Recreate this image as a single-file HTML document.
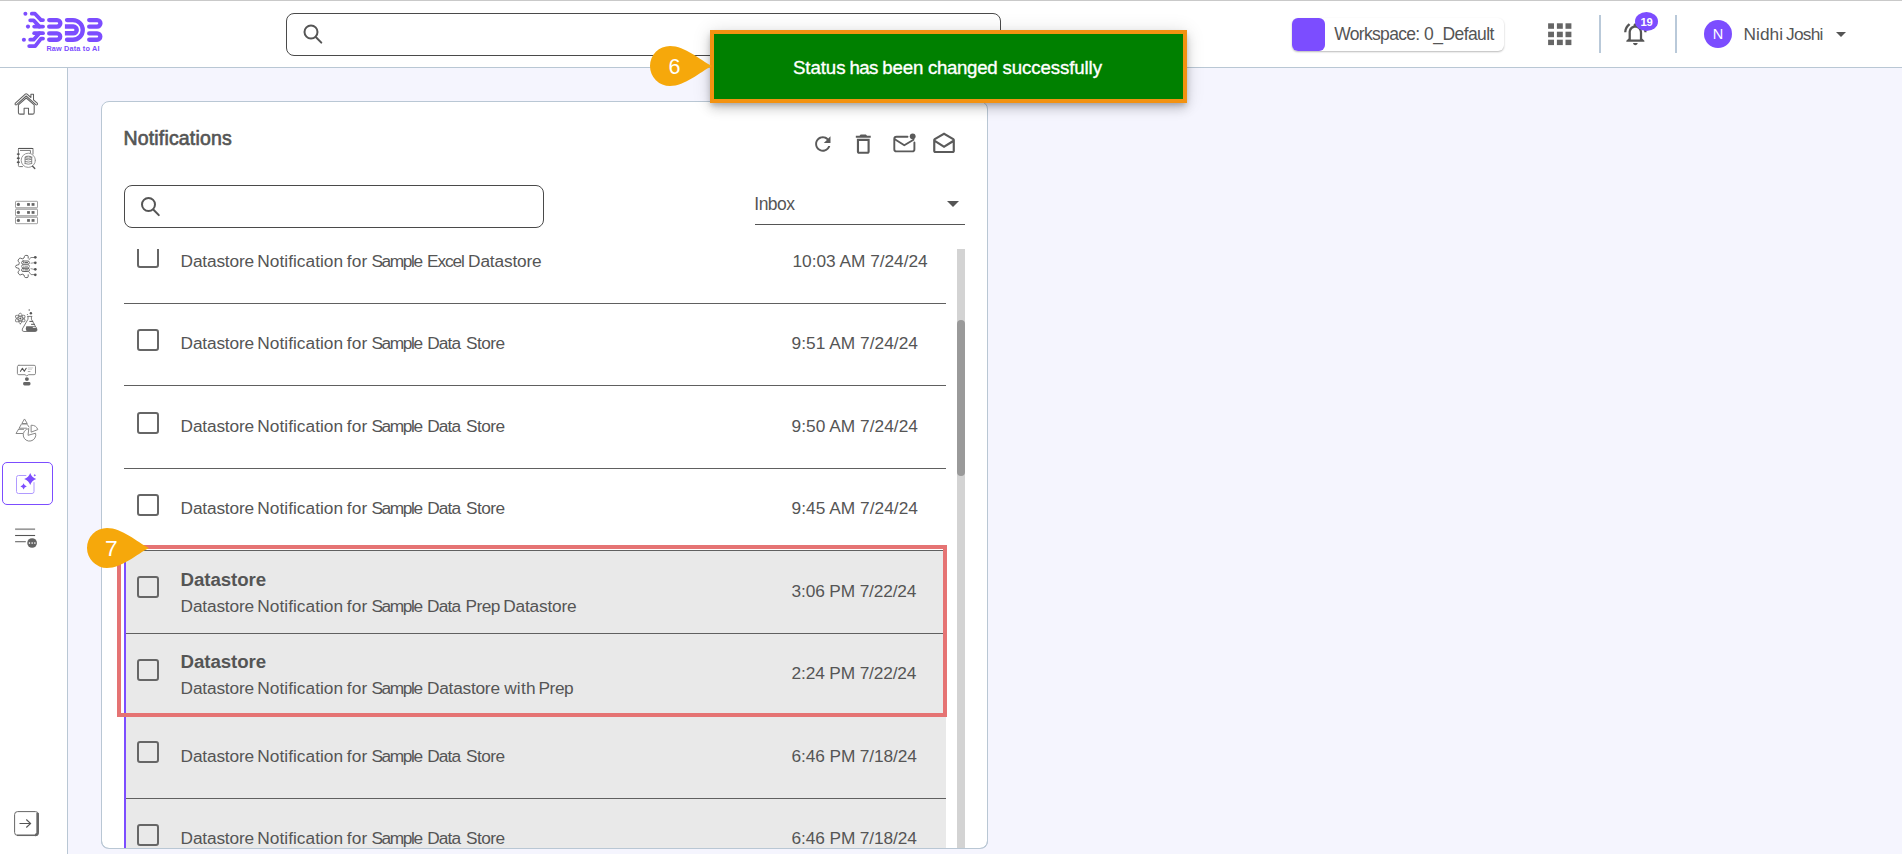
<!DOCTYPE html>
<html lang="en">
<head>
<meta charset="utf-8">
<title>Notifications</title>
<style>
*{box-sizing:border-box;margin:0;padding:0}
html,body{width:1902px;height:854px;overflow:hidden}
body{background:#f5f5fe;font-family:"Liberation Sans",sans-serif;color:#555;position:relative}
.abs{position:absolute}
#header{left:0;top:0;width:1902px;height:68px;background:#fff;border-bottom:1px solid #b9c7d4}
#topline{left:0;top:0;width:1902px;height:1px;background:#c9c9c9}
#sidebar{left:0;top:68px;width:68px;height:786px;background:#fff;border-right:1px solid #b9c7d4}
#hsearch{left:286px;top:13px;width:715px;height:43px;border:1px solid #4a4a4a;border-radius:8px;background:#fff}
#card{left:101px;top:101px;width:887px;height:748px;background:#fff;border:1px solid #b9c7d4;border-radius:8px;overflow:hidden}
.t{position:absolute;white-space:nowrap;line-height:1;color:#555}
svg{position:absolute;overflow:visible}
/* header right */
#wschip{left:1292px;top:18px;width:212px;height:33px;background:#fff;border-radius:6px;box-shadow:0 1px 2px rgba(0,0,0,.28)}
#wssq{left:1292px;top:18px;width:33px;height:33px;background:#7c4dff;border-radius:6px}
.vdiv{top:15px;width:2px;height:38px;background:#b9c9d9}
#avatar{left:1704px;top:20px;width:28px;height:28px;border-radius:50%;background:#7c4dff}
#badge{left:1635px;top:12px;width:23px;height:19px;border-radius:50%;background:#7c4dff}
.caret{width:0;height:0;border-left:5px solid transparent;border-right:5px solid transparent;border-top:5px solid #555}
/* card */
#csearch{left:124px;top:185px;width:420px;height:43px;border:1px solid #4a4a4a;border-radius:8px;background:#fff}
#selline{left:755px;top:224px;width:210px;height:1px;background:#555}
#track{left:957px;top:249px;width:8px;height:599px;background:#d3d3d3}
#thumb{left:957px;top:320px;width:8px;height:156px;background:#9a9a9a;border-radius:4px}
.rl{left:124px;width:822px;height:1px;background:#606060}
.cb{left:137px;width:22px;height:22px;border:2px solid #666;border-radius:3px}
#grey{left:126px;top:551px;width:820px;height:297px;background:#e9e9e9}
#purp{left:124px;top:549px;width:2px;height:299px;background:#7c4dff}
#redbox{left:117px;top:545px;width:830px;height:172px;border:4px solid #e57373}
/* toast */
#toast{left:710px;top:30px;width:477px;height:73px;background:#008000;border:4px solid #f39210;box-shadow:0 3px 5px -1px rgba(0,0,0,.2),0 6px 10px 0 rgba(0,0,0,.14),0 1px 18px 0 rgba(0,0,0,.12)}
</style>
</head>
<body>
<div id="header" class="abs"></div>
<div id="topline" class="abs"></div>
<div id="sidebar" class="abs"></div>
<div id="hsearch" class="abs"></div>

<svg id="logo" style="left:0;top:0" width="110" height="60" viewBox="0 0 110 60">
<g fill="#7c4dff"><circle cx="25.4" cy="13.7" r="2"/><circle cx="28" cy="26.6" r="2.05"/><circle cx="23.9" cy="39.7" r="2.05"/>
<path d="M35.5 22 L40 26.6 L35 26.6 Z M35 33.2 L40 33.2 L35.5 37.6 Z"/></g>
<g fill="none" stroke="#7c4dff" stroke-width="3.8" stroke-linecap="round" stroke-linejoin="round">
<path d="M31.8 13.7 H35 L41 20.1 H43"/>
<path d="M30.2 20.3 H33.6 L39.4 26.6"/>
<path d="M34.2 26.6 H43"/>
<path d="M34.2 33.2 H43"/>
<path d="M39.4 33.2 L33.6 39.7 H30.2"/>
<path d="M43 38.6 H41 L35.2 46.1 H29.2"/>
</g>
<g fill="none" stroke="#7c4dff" stroke-width="4.3" stroke-linecap="round">
<path d="M49.2 20.05 H57.05 A3.3 3.3 0 0 1 57.05 26.65 H49.2"/>
<path d="M49.2 33.4 H57.05 A3.175 3.175 0 0 1 57.05 39.75 H49.2"/>
<path d="M67 20.05 H72.9 A9.85 9.85 0 0 1 72.9 39.75 H67"/>
<path d="M89.2 20.05 H97.15 A3.3 3.3 0 0 1 97.15 26.65 H89.2"/>
<path d="M89.2 33.4 H97.15 A3.175 3.175 0 0 1 97.15 39.75 H89.2"/>
</g>
<path d="M64.9 26.55 H73.3 A3.375 3.375 0 0 1 73.3 33.3 H64.9" fill="none" stroke="#7c4dff" stroke-width="4.5"/>
</svg>
<span class="t" id="t_logo" style="left:46.4px;top:45.1px;font-size:7.3px;font-weight:bold;color:#7c4dff;letter-spacing:0.17px">Raw Data to AI</span>

<svg id="sideicons" style="left:0;top:68px" width="67" height="786" viewBox="0 68 67 786">
<!-- home -->
<g fill="none" stroke="#606060" stroke-width="1.050" stroke-linejoin="round" stroke-linecap="round">
<path d="M15.400 103.100 L25.300 94.100 Q26.200 93.300 27.100 94.100 L30.900 97.500 V94.300 H33.500 V99.900 L37.200 103.200 Q37.900 104 37.200 104.700 Q36.500 105.300 35.800 104.700 L26.200 96 L16.700 104.700 Q16 105.300 15.300 104.700 Q14.700 104 15.400 103.100 Z"/>
<path d="M18.400 104.900 L26.200 98 L34.200 104.900 V112.400 Q34.200 114.100 32.500 114.100 H28.500 V108.200 H24.100 V114.100 H20.100 Q18.400 114.100 18.400 112.400 Z"/>
</g>
<!-- catalog -->
<g fill="none" stroke="#777" stroke-width="1" stroke-linecap="round">
<path d="M22.5 166.6 H19.4 Q18.4 166.6 18.4 165.6 V149.4 Q18.4 148.4 19.4 148.4 H32 Q33 148.4 33 149.4 V154"/>
<path d="M18.6 148.5 H32.8" stroke="#555" stroke-width="1.2"/>
<path d="M20.4 150.4 H30.4 V152.8"/>
<circle cx="28.3" cy="160.3" r="7.1" stroke="#999"/>
<path d="M32.6 166.2 L34.8 168.5" stroke="#555" stroke-width="1.3"/>
<ellipse cx="28.4" cy="157.2" rx="3.3" ry="1"/>
<path d="M25.1 157.2 V163.6 M31.7 157.2 V163.6 M25.1 159.3 Q28.4 160.6 31.7 159.3 M25.1 161.5 Q28.4 162.8 31.7 161.5 M25.1 163.6 Q28.4 164.9 31.7 163.6" stroke="#888"/>
</g>
<g fill="#555"><ellipse cx="18.3" cy="154.1" rx="1.6" ry="0.95"/><ellipse cx="18.3" cy="158.2" rx="1.6" ry="0.95"/><ellipse cx="18.3" cy="162.2" rx="1.6" ry="0.95"/></g>
<!-- servers -->
<rect x="15.6" y="207.600" width="21.800" height="1.800" fill="#d4d4d4"/><rect x="15.600" y="215.600" width="21.800" height="1.800" fill="#d4d4d4"/>
<g fill="#fff" stroke="#8a8a8a" stroke-width="0.800"><rect x="15.5" y="201.3" width="22" height="6.4" rx="0.6"/><rect x="15.5" y="209.3" width="22" height="6.4" rx="0.6"/><rect x="15.5" y="217.3" width="22" height="6.4" rx="0.6"/></g>
<g fill="#666"><circle cx="18.400" cy="204.400" r="1.600"/><circle cx="18.400" cy="212.400" r="1.600"/><circle cx="18.400" cy="220.400" r="1.600"/>
<rect x="27.1" y="203.1" width="2.8" height="2.7"/><rect x="31.6" y="203.1" width="2.9" height="2.7"/>
<rect x="27.1" y="211.1" width="2.8" height="2.7"/><rect x="31.6" y="211.1" width="2.9" height="2.7"/>
<rect x="27.1" y="219.1" width="2.8" height="2.7"/><rect x="31.6" y="219.1" width="2.9" height="2.7"/></g>
<!-- gear db -->
<g fill="none" stroke="#666" stroke-width="1" stroke-linecap="round" stroke-linejoin="round">
<path d="M28.2 258.2 V256.6 Q28.2 255.4 27 255.4 H25.8 Q24.6 255.4 24.4 256.6 L24 258 Q23 258.6 22.2 258.9 L20.8 258.2 Q19.8 257.8 19.1 258.7 L18.3 259.9 Q17.7 260.9 18.5 261.7 L19.4 262.8 Q19 263.8 18.9 264.6 L17.4 265 Q15.5 265.3 15.5 266.4 V266.6 Q15.5 267.7 17.4 268 L18.9 268.4 Q19 269.2 19.4 270.2 L18.5 271.3 Q17.7 272.1 18.3 273.1 L19.1 274.3 Q19.8 275.2 20.8 274.8 L22.2 274.1 Q23 274.6 24 275 L24.4 276.4 Q24.6 277.6 25.8 277.6 H27 Q28.2 277.6 28.2 276.4 V274.8"/>
<rect x="21.6" y="261" width="7.8" height="3.2" rx="1.5"/><rect x="21.600" y="264.700" width="7.800" height="3.200" rx="1.500" stroke="#808080"/><path d="M23.600 266.300 H23.800 M25 266.300 H27.600" stroke="#999"/><rect x="21.6" y="268.3" width="7.8" height="3.2" rx="1.5"/>
<path d="M23.6 262.6 H23.8 M25 262.6 H27.6 M23.6 269.9 H23.8 M25 269.9 H27.6" stroke="#555"/>
<path d="M29.2 259.6 L30.7 257.5 H34" stroke="#888"/><path d="M31 263.2 L34 262.8" stroke="#999"/><path d="M31 268.7 L34 269.3" stroke="#999"/><path d="M29.2 272.2 L31 274.6 H34" stroke="#888"/>
</g>
<g fill="#555"><circle cx="35.3" cy="257.3" r="1.35"/><circle cx="35.3" cy="262.8" r="1.35"/><circle cx="35.3" cy="269.3" r="1.35"/><circle cx="35.3" cy="274.8" r="1.35"/></g>
<!-- flask -->
<g fill="none" stroke="#777" stroke-width="0.9" stroke-linecap="round" stroke-linejoin="round">
<ellipse cx="20.3" cy="318.5" rx="5.3" ry="2.1" transform="rotate(90 20.3 318.5)"/><ellipse cx="20.3" cy="318.5" rx="5.3" ry="2.1" transform="rotate(30 20.3 318.5)"/><ellipse cx="20.3" cy="318.5" rx="5.3" ry="2.1" transform="rotate(150 20.3 318.5)"/>
<path d="M27.5 316.4 H31.9 M28 316.4 V319.2 L22.3 329 Q21.6 331.5 24 331.5 H35 Q37.6 331.5 36.9 329 L31.4 319.2 V316.4" stroke="#777" stroke-width="0.950"/>
<path d="M29.8 321.4 H32.8 M31.5 324.3 H34.5" stroke="#555" stroke-width="1"/>
</g>
<path d="M26.3 326.3 H35.6 L37 329 Q37.5 331.4 35 331.4 H27.6 Q25.6 331 25.8 328.6 Z" fill="#666"/>
<rect x="32.8" y="326.9" width="3" height="1" fill="#eee"/>
<g fill="#555"><circle cx="20.3" cy="318.5" r="1"/><circle cx="29.2" cy="310" r="0.7"/><circle cx="30.9" cy="313.2" r="1.2"/><circle cx="27.3" cy="314.4" r="0.5"/></g>
<!-- presenter -->
<g fill="none" stroke="#888" stroke-width="1" stroke-linejoin="round" stroke-linecap="round">
<path d="M18.8 365.3 H34.1 Q35.5 365.3 35.5 366.7 V373.3 Q35.5 374.7 34.1 374.7 H28.6 L26.8 375.9 L25 374.7 H18.8 Q17.4 374.7 17.4 373.3 V366.7 Q17.4 365.3 18.8 365.3 Z"/>
<path d="M20.5 371.3 L22.4 368.3 L24.3 371.3 L26.2 368.3" stroke="#555" stroke-width="1.1"/>
<path d="M28.2 367.9 H32.8 M28.2 369.2 H31.6" stroke="#ccc"/><path d="M28.2 371.5 H30" stroke="#aaa"/>
</g>
<circle cx="26.9" cy="379.1" r="1.95" fill="#666"/><rect x="23.1" y="382" width="7.4" height="3.5" rx="1.4" fill="#666"/>
<!-- pyramid pie -->
<g fill="none" stroke="#888" stroke-width="1" stroke-linejoin="round" stroke-linecap="round">
<path d="M24.3 419.3 L21.8 423.5 H26.9 Z"/>
<path d="M21 424.6 H27.5" stroke="#bbb"/>
<path d="M21 424.9 L19.1 428.2 H26.5 M27.6 424.9 L29 427"/>
<path d="M18.5 429.3 L16 433.5 H22.6 M18.5 429.3 H23.6" />
<path d="M28.4 428.6 A6.3 6.3 0 1 0 35.6 433.2 L28.4 435.2 Z"/>
<path d="M31.5 425.2 A6.5 6.5 0 0 1 37.8 429.6 L31.5 432 Z"/>
</g>
<!-- active sparkle -->
<rect x="2.5" y="462.5" width="50" height="42" rx="4.500" fill="#fff" stroke="#7c4dff" stroke-width="1"/>
<path d="M26.300 475.500 H18.500 Q16.500 475.500 16.500 477.500 V491.500 Q16.500 493.500 18.500 493.500 H32 Q34 493.500 34 491.500 V482.200" fill="none" stroke="#b09aff" stroke-width="1"/>
<g fill="#7c4dff">
<path d="M30.200 473.100 Q31.700 477.600 36.200 479.100 Q31.700 480.600 30.200 485.100 Q28.700 480.600 24.200 479.100 Q28.700 477.600 30.200 473.100 Z"/>
<path d="M23.600 483.200 Q24.200 485.800 26.800 486.400 Q24.200 487 23.600 489.600 Q23 487 20.400 486.400 Q23 485.800 23.600 483.200 Z"/>
<path d="M34.800 474 Q35 475.100 36.100 475.300 Q35 475.500 34.800 476.600 Q34.600 475.500 33.500 475.300 Q34.600 475.100 34.800 474 Z"/>
</g>
<!-- list -->
<path d="M15.1 529.2 H35.1" stroke="#999" stroke-width="1.7"/><path d="M15.1 535.500 H35.100" stroke="#555" stroke-width="1.1"/><path d="M15.100 541.700 H25.800" stroke="#666" stroke-width="1.1"/>
<circle cx="32.100" cy="543" r="4.850" fill="#636363"/>
<g fill="#e6e6e6"><rect x="28.800" y="542.200" width="1.300" height="1.700"/><rect x="31.500" y="542.200" width="1.300" height="1.700"/><rect x="34.200" y="542.200" width="1.300" height="1.700"/></g>
<!-- logout -->
<rect x="14.600" y="811.600" width="23.800" height="23.800" rx="3" fill="#fff" stroke="#666" stroke-width="1"/>
<path d="M37.600 813 V832.700 Q37.600 835 35 835.100" fill="none" stroke="#666" stroke-width="2.500"/><path d="M17 835.300 H36" fill="none" stroke="#666" stroke-width="1.500"/>
<path d="M19.500 823.500 H30.500 M26.300 819.500 L30.600 823.500 L26.300 827.500" fill="none" stroke="#555" stroke-width="1.100"/>
</svg>

<svg id="hicons" style="left:0;top:0" width="1902" height="68" viewBox="0 0 1902 68">
<!-- header search -->
<g fill="none" stroke="#555" stroke-width="2" stroke-linecap="round"><circle cx="311" cy="32" r="6.500"/><path d="M316 37.200 L321.300 42.600"/></g>
<!-- grid -->
<g fill="#666">
<rect x="1548.100" y="23.300" width="5.900" height="5.500"/><rect x="1556.900" y="23.300" width="5.900" height="5.500"/><rect x="1565.500" y="23.300" width="5.900" height="5.500"/>
<rect x="1548.100" y="31.700" width="5.900" height="5.500"/><rect x="1556.900" y="31.700" width="5.900" height="5.500"/><rect x="1565.500" y="31.700" width="5.900" height="5.500"/>
<rect x="1548.100" y="39.700" width="5.900" height="5.400"/><rect x="1556.900" y="39.700" width="5.900" height="5.400"/><rect x="1565.500" y="39.700" width="5.900" height="5.400"/>
</g>
<!-- bell -->
<g transform="translate(1621.800 20.300) scale(1.130)" fill="#555"><path d="M12 22c1.100 0 2-.900 2-2h-4c0 1.100.900 2 2 2zm6-6v-5c0-3.070-1.630-5.640-4.500-6.320V4c0-.83-.67-1.500-1.500-1.500s-1.500.67-1.500 1.500v.68C7.640 5.360 6 7.920 6 11v5l-2 2v1h16v-1l-2-2zm-2 1H8v-6c0-2.480 1.510-4.500 4-4.500s4 2.020 4 4.500v6zM7.580 4.080L6.150 2.650C3.750 4.480 2.170 7.300 2.030 10.500h2a8.445 8.445 0 013.550-6.420zm12.390 6.420h2c-.15-3.200-1.730-6.020-4.120-7.850l-1.420 1.430a8.495 8.495 0 013.540 6.420z"/></g>
</svg>

<div id="wschip" class="abs"></div>
<div id="wssq" class="abs"></div>
<span class="t" id="t_ws" style="left:1334.20px;top:25.6px;font-size:17.5px"><span style="position:absolute;left:0.00px;top:0;letter-spacing:-0.67px">Workspace: </span><span style="position:absolute;left:89.90px;top:0;letter-spacing:-0.57px">0_Default</span></span>
<div class="abs vdiv" style="left:1599px"></div>
<div class="abs vdiv" style="left:1675px"></div>
<div id="badge" class="abs"></div>
<span class="t" id="t_19" style="left:1640.5px;top:16.5px;letter-spacing:-0.2px;font-size:11.3px;font-weight:bold;color:#fff">19</span>
<div id="avatar" class="abs"></div>
<span class="t" id="t_N" style="left:1712.8px;top:26.5px;letter-spacing:0px;font-size:14.5px;color:#fff">N</span>
<span class="t" id="t_nj" style="left:1743.40px;top:25.6px;font-size:17.3px"><span style="position:absolute;left:0.00px;top:0;letter-spacing:0.09px">Nidhi </span><span style="position:absolute;left:42.60px;top:0;letter-spacing:-0.75px">Joshi</span></span>
<div class="abs caret" style="left:1836px;top:32px"></div>

<!-- CARD -->
<div id="card" class="abs"></div>
<span class="t" id="t_title" style="left:123.4px;top:129.4px;letter-spacing:0.18px;font-size:19.5px;-webkit-text-stroke:0.65px #555">Notifications</span>
<div id="csearch" class="abs"></div>
<svg id="cicons" style="left:0;top:100px" width="1000" height="140" viewBox="0 100 1000 140">
<!-- card search -->
<g fill="none" stroke="#555" stroke-width="2" stroke-linecap="round"><circle cx="148.500" cy="204.500" r="6.500"/><path d="M153.500 209.700 L158.800 215.100"/></g>
<g fill="#5a5a5a">
<g transform="translate(811.300 132.500) scale(1)"><path transform="scale(0.960)" d="M17.650 6.350C16.200 4.900 14.210 4 12 4c-4.420 0-7.990 3.580-7.990 8s3.570 8 7.990 8c3.730 0 6.840-2.550 7.730-6h-2.080c-.82 2.330-3.040 4-5.650 4-3.310 0-6-2.690-6-6s2.690-6 6-6c1.660 0 3.140.69 4.220 1.780L13 11h7V4l-2.350 2.350z"/></g>
<g transform="translate(850.500 131.400) scale(1.065)"><path d="M6 19c0 1.100.900 2 2 2h8c1.100 0 2-.900 2-2V7H6v12zM8 9h8v10H8V9zm7.500-5l-1-1h-5l-1 1H5v2h14V4z"/></g>
<g transform="translate(931 131.400) scale(1.085)"><path d="M21.990 8c0-.72-.37-1.350-.94-1.700L12 1 2.950 6.300C2.380 6.650 2 7.280 2 8v10c0 1.100.900 2 2 2h16c1.100 0 2-.900 2-2l-.01-10zm-2 0v.010L12 13 4 8l8-4.680L19.990 8zM4 18v-7.660l8 5.020 7.990-4.990L20 18H4z"/></g>
</g>
<!-- mail unread -->
<g fill="none" stroke="#5a5a5a" stroke-width="1.900" stroke-linejoin="round" stroke-linecap="round">
<path d="M907.500 136.800 H896.500 Q894.300 136.800 894.300 139 V149.200 Q894.300 151.400 896.500 151.400 H912.200 Q914.400 151.400 914.400 149.200 V142.500"/>
<path d="M894.800 139.300 L904.300 145.300 L913.500 139.800"/>
</g>
<circle cx="912.700" cy="136.300" r="2.900" fill="#5a5a5a"/>
</svg>

<span class="t" id="t_inbox" style="left:754.3px;top:196.2px;letter-spacing:-0.52px;font-size:17.5px">Inbox</span>
<div class="abs caret" style="left:947px;top:201px;border-left-width:6px;border-right-width:6px;border-top-width:6px"></div>
<div id="selline" class="abs"></div>
<div id="track" class="abs"></div>
<div id="thumb" class="abs"></div>

<!-- LIST -->
<div id="grey" class="abs"></div>
<div id="purp" class="abs"></div>
<div class="abs rl" style="top:303px"></div>
<div class="abs rl" style="top:385px"></div>
<div class="abs rl" style="top:468px"></div>
<div class="abs rl" style="top:550px"></div>
<div class="abs rl" style="top:633px;left:126px;width:820px"></div>
<div class="abs rl" style="top:715px;left:126px;width:820px"></div>
<div class="abs rl" style="top:798px;left:126px;width:820px"></div>

<div class="abs" style="left:124px;top:249px;width:822px;height:30px;overflow:hidden"><div class="abs cb" style="left:13px;top:-3px"></div></div>
<div class="abs cb" style="top:329px"></div>
<div class="abs cb" style="top:412px"></div>
<div class="abs cb" style="top:494px"></div>
<div class="abs cb" style="top:576px"></div>
<div class="abs cb" style="top:659px"></div>
<div class="abs cb" style="top:741px"></div>
<div class="abs" style="left:124px;top:820px;width:822px;height:28px;overflow:hidden"><div class="abs cb" style="left:13px;top:4px"></div></div>

<span class="t" id="t_r1" style="left:180.60px;top:252.5px;font-size:17.3px"><span style="position:absolute;left:0.00px;top:0;letter-spacing:-0.18px">Datastore </span><span style="position:absolute;left:76.70px;top:0;letter-spacing:0.03px">Notification </span><span style="position:absolute;left:166.20px;top:0;letter-spacing:0.19px">for </span><span style="position:absolute;left:190.80px;top:0;letter-spacing:-1.36px">Sample </span><span style="position:absolute;left:246.40px;top:0;letter-spacing:-1.08px">Excel </span><span style="position:absolute;left:287.50px;top:0;letter-spacing:-0.16px">Datastore</span></span>
<span class="t" id="t_r2" style="left:180.60px;top:335px;font-size:17.3px"><span style="position:absolute;left:0.00px;top:0;letter-spacing:-0.18px">Datastore </span><span style="position:absolute;left:76.70px;top:0;letter-spacing:0.03px">Notification </span><span style="position:absolute;left:166.20px;top:0;letter-spacing:0.19px">for </span><span style="position:absolute;left:190.80px;top:0;letter-spacing:-1.36px">Sample </span><span style="position:absolute;left:246.60px;top:0;letter-spacing:-0.90px">Data </span><span style="position:absolute;left:285.50px;top:0;letter-spacing:-0.60px">Store</span></span>
<span class="t" id="t_r3" style="left:180.60px;top:417.5px;font-size:17.3px"><span style="position:absolute;left:0.00px;top:0;letter-spacing:-0.18px">Datastore </span><span style="position:absolute;left:76.70px;top:0;letter-spacing:0.03px">Notification </span><span style="position:absolute;left:166.20px;top:0;letter-spacing:0.19px">for </span><span style="position:absolute;left:190.80px;top:0;letter-spacing:-1.36px">Sample </span><span style="position:absolute;left:246.60px;top:0;letter-spacing:-0.90px">Data </span><span style="position:absolute;left:285.50px;top:0;letter-spacing:-0.60px">Store</span></span>
<span class="t" id="t_r4" style="left:180.60px;top:500px;font-size:17.3px"><span style="position:absolute;left:0.00px;top:0;letter-spacing:-0.18px">Datastore </span><span style="position:absolute;left:76.70px;top:0;letter-spacing:0.03px">Notification </span><span style="position:absolute;left:166.20px;top:0;letter-spacing:0.19px">for </span><span style="position:absolute;left:190.80px;top:0;letter-spacing:-1.36px">Sample </span><span style="position:absolute;left:246.60px;top:0;letter-spacing:-0.90px">Data </span><span style="position:absolute;left:285.50px;top:0;letter-spacing:-0.60px">Store</span></span>
<span class="t r" id="t_r5a" style="left:180.6px;top:570.6px;letter-spacing:-0.09px;font-size:18.7px;font-weight:bold">Datastore</span>
<span class="t" id="t_r5b" style="left:180.60px;top:597.5px;font-size:17.3px"><span style="position:absolute;left:0.00px;top:0;letter-spacing:-0.18px">Datastore </span><span style="position:absolute;left:76.70px;top:0;letter-spacing:0.03px">Notification </span><span style="position:absolute;left:166.20px;top:0;letter-spacing:0.19px">for </span><span style="position:absolute;left:190.80px;top:0;letter-spacing:-1.36px">Sample </span><span style="position:absolute;left:246.40px;top:0;letter-spacing:-0.76px">Data </span><span style="position:absolute;left:285.00px;top:0;letter-spacing:-0.60px">Prep </span><span style="position:absolute;left:322.60px;top:0;letter-spacing:-0.18px">Datastore</span></span>
<span class="t r" id="t_r6a" style="left:180.6px;top:653.1px;letter-spacing:-0.09px;font-size:18.7px;font-weight:bold">Datastore</span>
<span class="t" id="t_r6b" style="left:180.60px;top:680px;font-size:17.3px"><span style="position:absolute;left:0.00px;top:0;letter-spacing:-0.18px">Datastore </span><span style="position:absolute;left:76.70px;top:0;letter-spacing:0.03px">Notification </span><span style="position:absolute;left:166.20px;top:0;letter-spacing:0.19px">for </span><span style="position:absolute;left:190.80px;top:0;letter-spacing:-1.36px">Sample </span><span style="position:absolute;left:246.40px;top:0;letter-spacing:-0.24px">Datastore </span><span style="position:absolute;left:323.60px;top:0;letter-spacing:0.19px">with </span><span style="position:absolute;left:358.00px;top:0;letter-spacing:-0.50px">Prep</span></span>
<span class="t" id="t_r7" style="left:180.60px;top:747.5px;font-size:17.3px"><span style="position:absolute;left:0.00px;top:0;letter-spacing:-0.18px">Datastore </span><span style="position:absolute;left:76.70px;top:0;letter-spacing:0.03px">Notification </span><span style="position:absolute;left:166.20px;top:0;letter-spacing:0.19px">for </span><span style="position:absolute;left:190.80px;top:0;letter-spacing:-1.36px">Sample </span><span style="position:absolute;left:246.60px;top:0;letter-spacing:-0.90px">Data </span><span style="position:absolute;left:285.50px;top:0;letter-spacing:-0.60px">Store</span></span>
<span class="t" id="t_r8" style="left:180.60px;top:830px;font-size:17.3px"><span style="position:absolute;left:0.00px;top:0;letter-spacing:-0.18px">Datastore </span><span style="position:absolute;left:76.70px;top:0;letter-spacing:0.03px">Notification </span><span style="position:absolute;left:166.20px;top:0;letter-spacing:0.19px">for </span><span style="position:absolute;left:190.80px;top:0;letter-spacing:-1.36px">Sample </span><span style="position:absolute;left:246.60px;top:0;letter-spacing:-0.90px">Data </span><span style="position:absolute;left:285.50px;top:0;letter-spacing:-0.60px">Store</span></span>

<span class="t" id="t_d1" style="left:792.5px;top:252.5px;letter-spacing:-0.02px;font-size:17.3px">10:03 AM 7/24/24</span>
<span class="t" id="t_d2" style="left:791.5px;top:335px;letter-spacing:0.04px;font-size:17.3px">9:51 AM 7/24/24</span>
<span class="t" id="t_d3" style="left:791.5px;top:417.5px;letter-spacing:0.04px;font-size:17.3px">9:50 AM 7/24/24</span>
<span class="t" id="t_d4" style="left:791.5px;top:500px;letter-spacing:0.04px;font-size:17.3px">9:45 AM 7/24/24</span>
<span class="t" id="t_d5" style="left:791.6px;top:582.5px;letter-spacing:-0.14px;font-size:17.3px">3:06 PM 7/22/24</span>
<span class="t" id="t_d6" style="left:791.6px;top:665px;letter-spacing:-0.14px;font-size:17.3px">2:24 PM 7/22/24</span>
<span class="t" id="t_d7" style="left:791.6px;top:747.5px;letter-spacing:-0.11px;font-size:17.3px">6:46 PM 7/18/24</span>
<span class="t" id="t_d8" style="left:791.6px;top:830px;letter-spacing:-0.11px;font-size:17.3px">6:46 PM 7/18/24</span>

<!-- bottom mask to clip list at card bottom -->
<div class="abs" style="left:102px;top:848px;width:885px;height:6px;background:#f5f5fe"></div>
<div class="abs" style="left:101px;top:840px;width:887px;height:9px;border:1px solid #b9c7d4;border-top:none;border-radius:0 0 8px 8px"></div>

<div id="redbox" class="abs"></div>

<!-- TOAST + MARKERS -->
<div id="toast" class="abs"></div>
<span class="t" id="t_toast" style="left:792.90px;top:58.8px;font-size:18.7px;color:#fff;-webkit-text-stroke:0.35px #fff"><span style="position:absolute;left:0.00px;top:0;letter-spacing:-0.07px">Status </span><span style="position:absolute;left:56.70px;top:0;letter-spacing:-0.69px">has </span><span style="position:absolute;left:89.40px;top:0;letter-spacing:-0.16px">been </span><span style="position:absolute;left:135.10px;top:0;letter-spacing:-0.35px">changed </span><span style="position:absolute;left:209.70px;top:0;letter-spacing:-0.12px">successfully</span></span>

<svg id="markers" style="left:0;top:0" width="1902" height="854" viewBox="0 0 1902 854">
<g fill="#f6a80b">
<path d="M712 66 C700 60 685 46 670 46 A20 20 0 1 0 670 86 C685 86 700 72 712 66 Z"/>
<path d="M149 547.900 C137 541.900 122 527.900 107 527.900 A20 20 0 1 0 107 567.900 C122 567.900 137 553.900 149 547.900 Z"/>
</g>
<text id="t_m6" x="674.500" y="73.700" font-family="Liberation Sans, sans-serif" font-size="21.500" fill="#fff" text-anchor="middle">6</text>
<text id="t_m7" x="111.400" y="556.200" font-family="Liberation Sans, sans-serif" font-size="22.800" fill="#fff" text-anchor="middle">7</text>
</svg>
</body>
</html>
